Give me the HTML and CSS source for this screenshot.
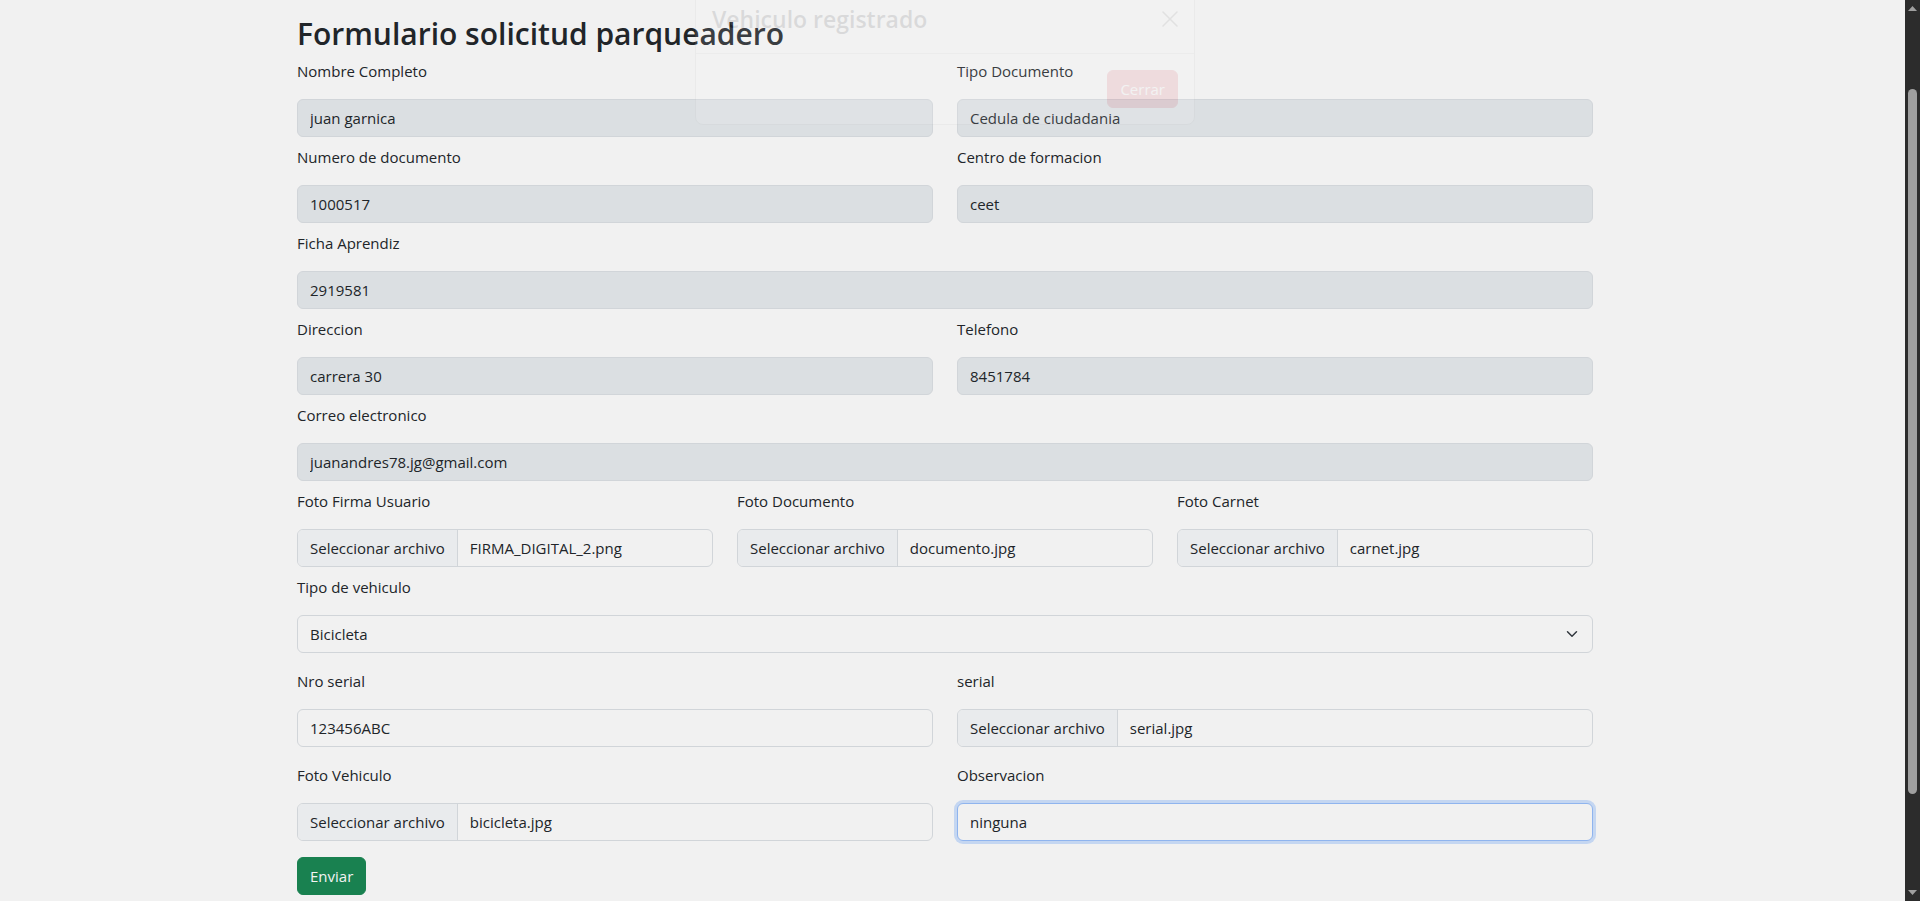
FILE: index.html
```html
<!DOCTYPE html>
<html lang="es">
<head>
<meta charset="utf-8">
<meta name="viewport" content="width=device-width, initial-scale=1">
<title>Formulario solicitud parqueadero</title>
<link rel="stylesheet" href="styles.css">
</head>
<body>
<main class="page">
  <div class="container">
    <h2 class="page-title">Formulario solicitud parqueadero</h2>
    <form class="form">
      <div class="row">
        <div class="field"><label for="nombre">Nombre Completo</label><input class="control" id="nombre" type="text" value="juan garnica" disabled></div>
        <div class="field"><label for="tipodoc">Tipo Documento</label><input class="control" id="tipodoc" type="text" value="Cedula de ciudadania" disabled></div>
      </div>
      <div class="row">
        <div class="field"><label for="numdoc">Numero de documento</label><input class="control" id="numdoc" type="text" value="1000517" disabled></div>
        <div class="field"><label for="centro">Centro de formacion</label><input class="control" id="centro" type="text" value="ceet" disabled></div>
      </div>
      <div class="row">
        <div class="field"><label for="ficha">Ficha Aprendiz</label><input class="control" id="ficha" type="text" value="2919581" disabled></div>
      </div>
      <div class="row">
        <div class="field"><label for="direccion">Direccion</label><input class="control" id="direccion" type="text" value="carrera 30" disabled></div>
        <div class="field"><label for="telefono">Telefono</label><input class="control" id="telefono" type="text" value="8451784" disabled></div>
      </div>
      <div class="row">
        <div class="field"><label for="correo">Correo electronico</label><input class="control" id="correo" type="email" value="juanandres78.jg@gmail.com" disabled></div>
      </div>
      <div class="row">
        <div class="field"><label for="firma">Foto Firma Usuario</label><label class="file" for="firma"><input class="file-input" id="firma" type="file"><span class="file-button">Seleccionar archivo</span><span class="file-name">FIRMA_DIGITAL_2.png</span></label></div>
        <div class="field"><label for="documento">Foto Documento</label><label class="file" for="documento"><input class="file-input" id="documento" type="file"><span class="file-button">Seleccionar archivo</span><span class="file-name">documento.jpg</span></label></div>
        <div class="field"><label for="carnet">Foto Carnet</label><label class="file" for="carnet"><input class="file-input" id="carnet" type="file"><span class="file-button">Seleccionar archivo</span><span class="file-name">carnet.jpg</span></label></div>
      </div>
      <div class="row row-spaced">
        <div class="field"><label for="vehiculo">Tipo de vehiculo</label><select class="control select" id="vehiculo"><option>Bicicleta</option></select></div>
      </div>
      <div class="row row-spaced">
        <div class="field"><label for="nroserial">Nro serial</label><input class="control" id="nroserial" type="text" value="123456ABC"></div>
        <div class="field"><label for="serial">serial</label><label class="file" for="serial"><input class="file-input" id="serial" type="file"><span class="file-button">Seleccionar archivo</span><span class="file-name">serial.jpg</span></label></div>
      </div>
      <div class="row row-spaced">
        <div class="field"><label for="fotoveh">Foto Vehiculo</label><label class="file" for="fotoveh"><input class="file-input" id="fotoveh" type="file"><span class="file-button">Seleccionar archivo</span><span class="file-name">bicicleta.jpg</span></label></div>
        <div class="field"><label for="observacion">Observacion</label><input class="control control-active" id="observacion" type="text" value="ninguna"></div>
      </div>
      <button class="btn btn-success" type="submit">Enviar</button>
    </form>
  </div>
  <div class="modal-layer">
    <section class="modal" role="dialog" aria-labelledby="modal-title">
      <header class="modal-header">
        <h4 class="modal-title" id="modal-title">Vehiculo registrado</h4>
        <button class="btn-close" type="button" aria-label="Close">
          <svg viewBox="0 0 16 16" width="16" height="16" aria-hidden="true"><path d="M1 1 15 15M15 1 1 15" fill="none" stroke="#000" stroke-width="1.5" stroke-linecap="round"/></svg>
        </button>
      </header>
      <footer class="modal-footer"><button class="btn btn-danger" type="button">Cerrar</button></footer>
    </section>
  </div>
</main>
<div class="scrollbar" aria-hidden="true">
  <svg class="scroll-arrow" viewBox="0 0 9 5" width="9" height="5"><path d="M0 5 4.5 0 9 5Z"/></svg>
  <div class="scroll-track"><div class="scroll-thumb"></div></div>
  <svg class="scroll-arrow" viewBox="0 0 9 5" width="9" height="5"><path d="M0 0 4.5 5 9 0Z"/></svg>
</div>
</body>
</html>
```
FILE: styles.css
```css
*, *::before, *::after { box-sizing: border-box; }

body {
  display: flex;
  height: 100vh;
  margin: 0;
  overflow: hidden;
  background: #f1f1f1;
  color: #212529;
  font-family: "Segoe UI", "Open Sans", "Noto Sans", sans-serif;
  font-size: 15px;
  line-height: 24px;
}

button, input, select { font: inherit; color: inherit; }

.page {
  position: relative;
  flex: 1;
  min-width: 0;
  padding-right: 15px;
  overflow: hidden;
}

.container {
  max-width: 1320px;
  margin: 0 auto;
  padding: 15px 12px 6px;
}

.page-title {
  margin: 0 0 6px;
  font-size: 30px;
  font-weight: 600;
  line-height: 38px;
}

.row { display: flex; gap: 24px; margin-bottom: 8px; }
.row-spaced { margin-bottom: 16px; }

.field {
  display: flex;
  flex: 1;
  flex-direction: column;
  gap: 16px;
  min-width: 0;
}

.control, .file {
  width: 100%;
  height: 38px;
  border: 1px solid #d1d5d9;
  border-radius: 6px;
  background: #f1f1f1;
}

.control { padding: 6px 12px; outline: 0; }
.control:disabled { background: #dbdfe2; color: #212529; opacity: 1; }
.control-active { border-color: #8fb4ee; box-shadow: 0 0 0 3px #c4d6f1; }

.select {
  appearance: none;
  background: #f1f1f1 url("data:image/svg+xml,%3Csvg xmlns='http://www.w3.org/2000/svg' viewBox='0 0 16 16'%3E%3Cpath fill='none' stroke='%23343a40' stroke-linecap='round' stroke-linejoin='round' stroke-width='2' d='m2 5 6 6 6-6'/%3E%3C/svg%3E") no-repeat right 12px center / 16px 12px;
}

.file { position: relative; display: flex; overflow: hidden; }
.file-input { position: absolute; inset: 0; width: 100%; opacity: 0; }
.file-button {
  padding: 6px 12px;
  border-right: 1px solid #d1d5d9;
  background: #e9ebed;
  white-space: nowrap;
}
.file-name { padding: 6px 12px; }

.btn {
  height: 38px;
  padding: 6px 12px;
  border: 1px solid;
  border-radius: 6px;
  color: #f3f3f3;
}
.btn-success { border-color: #198150; background: #198150; }
.btn-danger { border-color: #dc3545; background: #dc3545; color: #fff; }

/* Dialog fading out above the top edge of the page */
.modal-layer {
  position: absolute;
  inset: -16px 15px auto 0;
  display: flex;
  justify-content: center;
  opacity: 0.11;
  pointer-events: none;
}
.modal {
  width: 500px;
  border: 1px solid #bbb;
  border-radius: 8px;
  background: #fff;
}
.modal-header {
  display: flex;
  align-items: center;
  justify-content: space-between;
  padding: 16px;
  border-bottom: 1px solid #c5c8cb;
}
.modal-title { margin: 0; font-size: 23px; font-weight: 600; line-height: 36px; }
.btn-close {
  display: flex;
  padding: 8px 0;
  border: 0;
  background: none;
  opacity: 0.6;
}
.modal-footer { display: flex; justify-content: flex-end; padding: 16px; }

.scrollbar {
  display: flex;
  flex-direction: column;
  align-items: center;
  gap: 6px;
  width: 15px;
  padding: 6px 0;
  background: #2c2c2c;
}
.scroll-arrow { fill: #9f9f9f; }
.scroll-track { display: flex; flex: 1; width: 9px; padding: 72px 0 90px; }
.scroll-thumb { flex: 1; border-radius: 5px; background: #9f9f9f; }
```
